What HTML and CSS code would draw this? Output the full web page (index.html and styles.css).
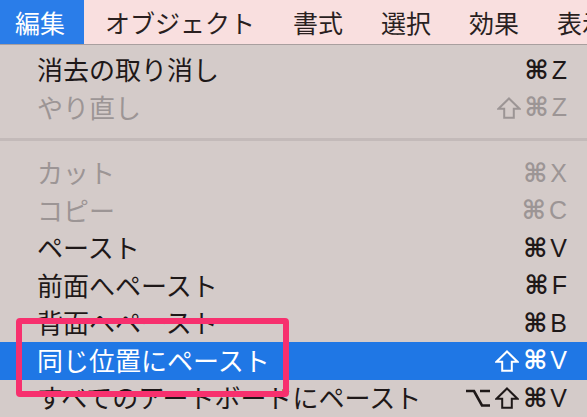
FILE: index.html
```html
<!DOCTYPE html>
<html lang="ja">
<head>
<meta charset="utf-8">
<title>編集メニュー</title>
<link rel="stylesheet" href="styles.css">
</head>
<body>
<div class="screen">
  <nav class="menubar">
    <span class="bar-item active">編集</span>
    <span class="bar-item second">オブジェクト</span>
    <span class="bar-item">書式</span>
    <span class="bar-item">選択</span>
    <span class="bar-item">効果</span>
    <span class="bar-item last">表示</span>
  </nav>
  <div class="menu">
    <div class="row"><span class="label">消去の取り消し</span><span class="key"><span class="cmd">⌘</span>Z</span></div>
    <div class="row disabled"><span class="label">やり直し</span><span class="key"><svg class="shift" viewBox="0 0 24 22"><path d="M12 1.5 L22.5 11.8 L16.8 11.8 L16.8 20.8 L7.2 20.8 L7.2 11.8 L1.5 11.8 Z"/></svg><span class="cmd">⌘</span>Z</span></div>
    <div class="sep"></div>
    <div class="row disabled"><span class="label">カット</span><span class="key"><span class="cmd">⌘</span>X</span></div>
    <div class="row disabled"><span class="label">コピー</span><span class="key"><span class="cmd">⌘</span>C</span></div>
    <div class="row"><span class="label">ペースト</span><span class="key"><span class="cmd">⌘</span>V</span></div>
    <div class="row"><span class="label">前面へペースト</span><span class="key"><span class="cmd">⌘</span>F</span></div>
    <div class="row"><span class="label">背面へペースト</span><span class="key"><span class="cmd">⌘</span>B</span></div>
    <div class="row selected"><span class="label">同じ位置にペースト</span><span class="key"><svg class="shift" viewBox="0 0 24 22"><path d="M12 1.5 L22.5 11.8 L16.8 11.8 L16.8 20.8 L7.2 20.8 L7.2 11.8 L1.5 11.8 Z"/></svg><span class="cmd">⌘</span>V</span></div>
    <div class="row"><span class="label">すべてのアートボードにペースト</span><span class="key"><svg class="opt" viewBox="0 0 26 20"><path d="M1 3 L9 3 L17 17.5 L25 17.5 M15 3 L25 3"/></svg><svg class="shift" viewBox="0 0 24 22"><path d="M12 1.5 L22.5 11.8 L16.8 11.8 L16.8 20.8 L7.2 20.8 L7.2 11.8 L1.5 11.8 Z"/></svg><span class="cmd">⌘</span>V</span></div>
  </div>
  <div class="callout"></div>
</div>
</body>
</html>
```

FILE: styles.css
```css
html, body {
  margin: 0;
  padding: 0;
}
body {
  width: 587px;
  height: 417px;
  overflow: hidden;
  background: #d4cbc9;
  font-family: "Noto Sans CJK JP", "Noto Sans", sans-serif;
}
.screen {
  position: relative;
  width: 587px;
  height: 417px;
  overflow: hidden;
}
.menubar {
  display: flex;
  height: 44px;
  background: #f9dfdf;
  border-bottom: 1px solid #a99f9f;
  white-space: nowrap;
  overflow: hidden;
}
.bar-item {
  font-size: 25px;
  line-height: 44px;
  padding: 0 19px;
  color: #2a1f1f;
  flex: none;
}
.bar-item.active {
  padding: 0 19px 0 15px;
  background: #2a7de9;
  color: #ffffff;
}
.bar-item.second {
  margin-left: 2px;
}
.bar-item.last {
  padding-right: 0;
}
.menu {
  padding-top: 6.5px;
}
.row {
  display: flex;
  align-items: center;
  justify-content: space-between;
  height: 37.5px;
  padding: 0 20px 0 37px;
  color: #1e1818;
  white-space: nowrap;
}
.label {
  font-size: 26px;
  line-height: 37.5px;
  padding-bottom: 3px;
}
.key {
  display: flex;
  align-items: center;
  font-family: "Liberation Sans", "DejaVu Sans", sans-serif;
  font-size: 25px;
  line-height: 37.5px;
}
.cmd {
  font-family: "DejaVu Sans", sans-serif;
  font-weight: bold;
  font-size: 26px;
  margin-right: 3px;
}
.shift {
  width: 24px;
  height: 22px;
  margin-right: 4px;
  fill: none;
  stroke: currentColor;
  stroke-width: 2;
  stroke-linejoin: miter;
}
.opt {
  width: 26px;
  height: 20px;
  margin-right: 4px;
  fill: none;
  stroke: currentColor;
  stroke-width: 2.6;
}
.row.disabled {
  color: #9c9595;
}
.row.selected {
  background: #1f77e5;
  color: #ffffff;
}
.sep {
  height: 28px;
  display: flex;
  flex-direction: column;
}
.sep::before {
  content: "";
  display: block;
  height: 3px;
  margin-top: 11.5px;
  background: #c3bab9;
}
.callout {
  position: absolute;
  left: 16px;
  top: 318px;
  width: 261px;
  height: 67px;
  border: 6px solid #f7306e;
  border-radius: 4px;
}
```
